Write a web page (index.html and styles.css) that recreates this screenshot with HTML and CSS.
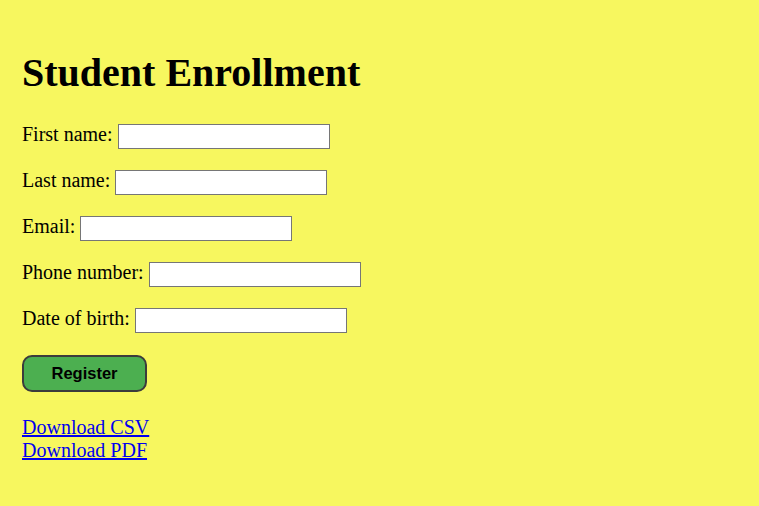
FILE: index.html
```html
<!DOCTYPE html>
<html lang="en">
<head>
<meta charset="utf-8">
<title>Student Enrollment</title>
<link rel="stylesheet" href="styles.css">
</head>
<body>
<h1 class="title">Student Enrollment</h1>
<form class="form">
  <p class="row"><label>First name:</label> <input class="field" type="text"></p>
  <p class="row"><label>Last name:</label> <input class="field" type="text"></p>
  <p class="row"><label>Email:</label> <input class="field" type="text"></p>
  <p class="row"><label>Phone number:</label> <input class="field" type="text"></p>
  <p class="row"><label>Date of birth:</label> <input class="field" type="text"></p>
  <button class="btn" type="button">Register</button>
</form>
<div class="links">
  <a href="#">Download CSV</a><br>
  <a href="#">Download PDF</a>
</div>
</body>
</html>
```
FILE: styles.css
```css
html { background: #f7f75f; }
body {
  margin: 0;
  padding: 14px 22px;
  font-family: "Liberation Serif", "Times New Roman", serif;
  font-size: 20px;
  color: #000;
}
.title {
  font-size: 40px;
  font-weight: bold;
  margin: 35px 0 27px;
}
.row {
  margin: 0 0 20px;
}
.field {
  box-sizing: border-box;
  width: 212px;
  height: 25px;
  border: 1px solid #767676;
  background: #fff;
  font-size: 14px;
  padding: 2px 4px;
  vertical-align: middle;
}
.btn {
  width: 125px;
  height: 37px;
  background: #4caf50;
  border: 2px solid #3c3c3c;
  border-radius: 10px;
  font-family: "Liberation Sans", Arial, sans-serif;
  font-weight: bold;
  font-size: 16.5px;
  color: #000;
  margin-top: 2px;
}
.links {
  margin-top: 24px;
}
.links a { color: #0000ee; }
```
